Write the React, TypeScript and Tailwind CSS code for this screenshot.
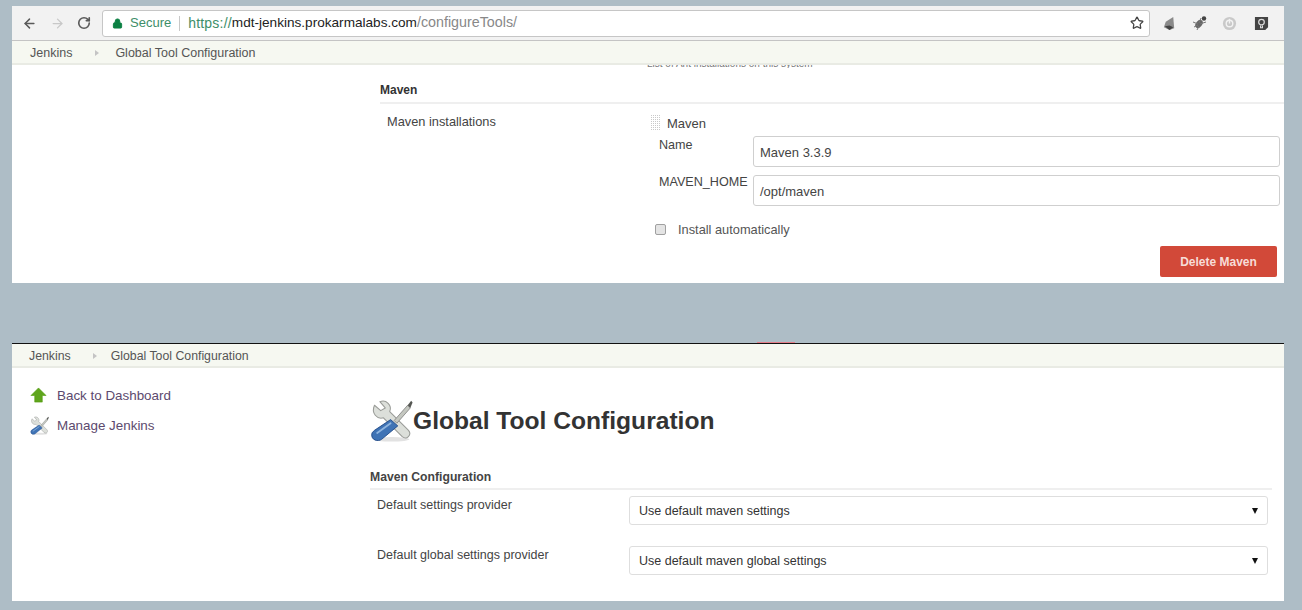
import { ArrowLeft, ArrowRight, RotateCw, Star, Lock } from 'lucide-react'

const font = { fontFamily: '"Liberation Sans", Arial, sans-serif' }

function ToolsIcon({ className }: { className: string }) {
  return (
    <svg viewBox="0 0 48 48" className={className}>
      <ellipse cx="24" cy="45" rx="20" ry="2.5" fill="#e2e2e2" />
      {/* wrench */}
      <path d="M5 7 L12 13 L17 10 L11 3 C18 0 25 7 22 14 L43 35 C47 40 41 46 36 42 L15 21 C8 23 1 16 5 7 Z" fill="#dcdfda" stroke="#9a9c98" strokeWidth="1.2" strokeLinejoin="round" />
      {/* screwdriver shaft */}
      <path d="M27 24 L42 7 L45 10 L30 27 Z" fill="#c4c7c0" stroke="#808080" strokeWidth="0.9" />
      <path d="M42 7 L46 2 L47.500 4 L45 10 Z" fill="#555753" />
      {/* handle */}
      <path d="M23 23 L31 30 L13 45 C9 48 1 46 2 39 C2.500 37 3 37 5 35 Z" fill="#3f73b5" stroke="#204a87" strokeWidth="1" strokeLinejoin="round" />
      <path d="M8 38 L23 27" stroke="#8fb5df" strokeWidth="2" strokeLinecap="round" />
    </svg>
  )
}

function SelectRow({ label, value, top }: { label: string; value: string; top: string }) {
  return (
    <div className={`flex ${top}`}>
      <div className="w-[259px] pl-[7px] text-[12.500px] text-[#444]">{label}</div>
      <div className="flex h-[29px] w-[639px] items-center justify-between rounded-[3px] border border-[#dedede] bg-white pr-[9px] pl-[9px] text-[12.500px] text-[#333]">
        <span className="pt-[2px]">{value}</span>
        <span className="h-0 w-0 border-x-[3px] border-t-[6px] border-x-transparent border-t-[#111]" />
      </div>
    </div>
  )
}

export default function App() {
  return (
    <div className="h-[610px] w-[1302px] overflow-hidden bg-[#aebdc6] pt-[6px] pr-[18px] pl-[12px]" style={font}>
      {/* top capture */}
      <div className="h-[277px] bg-white">
        <div className="flex h-[35px] items-center border-b border-[#c4c4c4] bg-[#f2f2f2]">
          <ArrowLeft className="ml-[10px] h-[15px] w-[15px] text-[#5a5a5a]" strokeWidth={2.4} />
          <ArrowRight className="ml-[13px] h-[15px] w-[15px] text-[#c8c8c8]" strokeWidth={2} />
          <RotateCw className="ml-[12px] h-[14px] w-[14px] text-[#5a5a5a]" strokeWidth={2.8} />
          <div className="ml-[11px] flex h-[27px] w-[1048px] items-center rounded-[3px] border border-[#c6c6c6] bg-white pl-[9px] text-[13px]">
            <Lock className="h-[11px] w-[11px] text-[#0b8043]" fill="#0b8043" strokeWidth={2} />
            <span className="ml-[7px] text-[#3d8e68]">Secure</span>
            <span className="mx-[8px] h-[15px] w-px bg-[#c8c8c8]" />
            <span className="text-[14px] tracking-[0.2px] text-[#3d8e68]">https://</span>
            <span className="text-[13.600px] text-[#222]">mdt-jenkins.prokarmalabs.com</span>
            <span className="text-[14.300px] text-[#888]">/configureTools/</span>
            <Star className="mr-[5px] ml-auto h-[14px] w-[14px] text-[#444]" strokeWidth={2.2} />
          </div>
          {/* extension icons */}
          <svg viewBox="0 0 16 16" className="ml-[12px] h-[15px] w-[15px]">
            <path d="M12 1 L4 6 L2 12 L8 15 L13 13 Z" fill="#8a8a8a" />
            <path d="M3 11 L8 10 L12 12 L8 15 Z" fill="#444" />
          </svg>
          <svg viewBox="0 0 16 16" className="ml-[15px] h-[16px] w-[16px]">
            <ellipse cx="7" cy="9" rx="3" ry="4.500" transform="rotate(40 7 9)" fill="#666" />
            <path d="M1 7 L6 9 M2 12 L6 10 M5 15 L7 11 M9 3 L7 8 M14 7 L8 9" stroke="#777" strokeWidth="1" />
            <circle cx="12" cy="3.500" r="2.200" fill="#444" />
          </svg>
          <svg viewBox="0 0 16 16" className="ml-[14px] h-[15px] w-[15px]">
            <circle cx="8" cy="8" r="7" fill="#c9c9c9" />
            <circle cx="8" cy="8" r="3.500" fill="none" stroke="#f2f2f2" strokeWidth="1.500" />
            <path d="M8 3 V8" stroke="#f2f2f2" strokeWidth="1.500" />
          </svg>
          <svg viewBox="0 0 16 16" className="ml-[17px] h-[15px] w-[15px]">
            <path d="M1 1 H15 V12 L12 15 H1 Z" fill="#444" />
            <circle cx="8" cy="6.500" r="3" fill="none" stroke="#ddd" strokeWidth="1.300" />
            <path d="M7 10 V12.500 H9 V10" fill="none" stroke="#ddd" strokeWidth="1.200" />
          </svg>
        </div>
        <div className="flex h-[24px] items-center border-b-2 border-[#e9ebe4] bg-[#f6f8f1] pt-[2px] pl-[18px] text-[12.500px] text-[#555]">
          <span>Jenkins</span>
          <span className="mr-[16px] ml-[23px] h-0 w-0 border-y-[3px] border-l-[4px] border-y-transparent border-l-[#c4c4c4]" />
          <span>Global Tool Configuration</span>
        </div>

        <div className="h-[3px] overflow-hidden pl-[635px] text-[10px] leading-[10px] text-[#777]">
          <div className="mt-[-6px]">List of Ant installations on this system</div>
        </div>
        <div className="ml-[368px]">
          <div className="mt-[15px] border-b-2 border-[#efefef] pb-[5px] text-[12px] leading-[14px] font-bold text-[#333]">Maven</div>
          <div className="mt-[11px] flex">
            <div className="w-[267px] pl-[7px] text-[12.800px] leading-[14px] text-[#444]">Maven installations</div>
            <div className="flex-1 pr-[4px]">
              <div className="flex items-center pl-[3px] text-[13px] leading-[14px] text-[#444]">
                <span className="h-[16px] w-[11px] bg-[#c9c9c9] bg-[repeating-linear-gradient(0deg,#fff_0_1px,transparent_1px_2px),repeating-linear-gradient(90deg,#fff_0_1px,transparent_1px_2px)]" />
                <span className="ml-[6px] pt-[2px]">Maven</span>
              </div>
              <div className="mt-[7px] flex">
                <div className="w-[106px] pl-[12px] text-[12.600px] leading-[14px] text-[#444]">Name</div>
                <div className="mt-[-2px] flex h-[31px] flex-1 items-center rounded-[3px] border border-[#cfcfcf] bg-white pt-[2px] pl-[6px] text-[13px] text-[#444]">
                  Maven 3.3.9
                </div>
              </div>
              <div className="mt-[8px] flex">
                <div className="w-[106px] pl-[12px] text-[12.600px] leading-[14px] text-[#444]">MAVEN_HOME</div>
                <div className="flex h-[31px] flex-1 items-center rounded-[3px] border border-[#cfcfcf] bg-white pt-[2px] pl-[6px] text-[13px] text-[#444]">
                  /opt/maven
                </div>
              </div>
              <div className="mt-[15px] flex items-center pl-[8px] text-[12.800px] leading-[14px] text-[#555]">
                <span className="h-[11px] w-[11px] rounded-[2px] border border-[#a0a0a0] bg-[#e4e4e4]" />
                <span className="ml-[12px] pt-[2px]">Install automatically</span>
              </div>
              <div className="mt-[9px] flex justify-end pr-[3px]">
                <div className="flex h-[31px] w-[117px] items-center justify-center rounded-[2px] bg-[#d24939] text-[12px] font-bold text-[#f7dcd8]">
                  Delete Maven
                </div>
              </div>
            </div>
          </div>
        </div>
      </div>

      {/* bottom capture */}
      <div className="relative mt-[60px] h-[258px] border-t border-[#111] bg-white">
        <span className="absolute -top-[2px] left-[745px] h-[1px] w-[38px] bg-[#e57e8a]" />
        <div className="flex h-[24px] items-center border-b-2 border-[#e9ebe4] bg-[#f6f8f1] pt-[2px] pl-[17px] text-[12.300px] text-[#555]">
          <span>Jenkins</span>
          <span className="mr-[14px] ml-[22px] h-0 w-0 border-y-[3px] border-l-[4px] border-y-transparent border-l-[#c4c4c4]" />
          <span>Global Tool Configuration</span>
        </div>
        <div className="flex">
          <div className="w-[358px] pt-[19px] pl-[18px] text-[13.400px] leading-[14px] text-[#5c4a6e]">
            <div className="flex items-center">
              <svg viewBox="0 0 18 18" className="h-[17px] w-[17px]">
                <path d="M9 1 L17 9 H13 V16 H5 V9 H1 Z" fill="#5fa51d" stroke="#4e9a06" strokeWidth="0.6" />
              </svg>
              <span className="ml-[10px]">Back to Dashboard</span>
            </div>
            <div className="mt-[12px] flex items-center">
              <ToolsIcon className="h-[19px] w-[19px]" />
              <span className="ml-[8px]">Manage Jenkins</span>
            </div>
          </div>
          <div className="flex-1 pr-[12px]">
            <div className="mt-[31px] flex items-center">
              <ToolsIcon className="h-[43px] w-[43px]" />
              <span className="text-[24.600px] leading-[43px] font-bold text-[#333]">Global Tool Configuration</span>
            </div>
            <div className="mt-[28px] border-b-2 border-[#efefef] pb-[4px] text-[12.200px] leading-[14px] font-bold text-[#444]">
              Maven Configuration
            </div>
            <SelectRow label="Default settings provider" value="Use default maven settings" top="mt-[6px]" />
            <SelectRow label="Default global settings provider" value="Use default maven global settings" top="mt-[21px]" />
          </div>
        </div>
      </div>
    </div>
  )
}
